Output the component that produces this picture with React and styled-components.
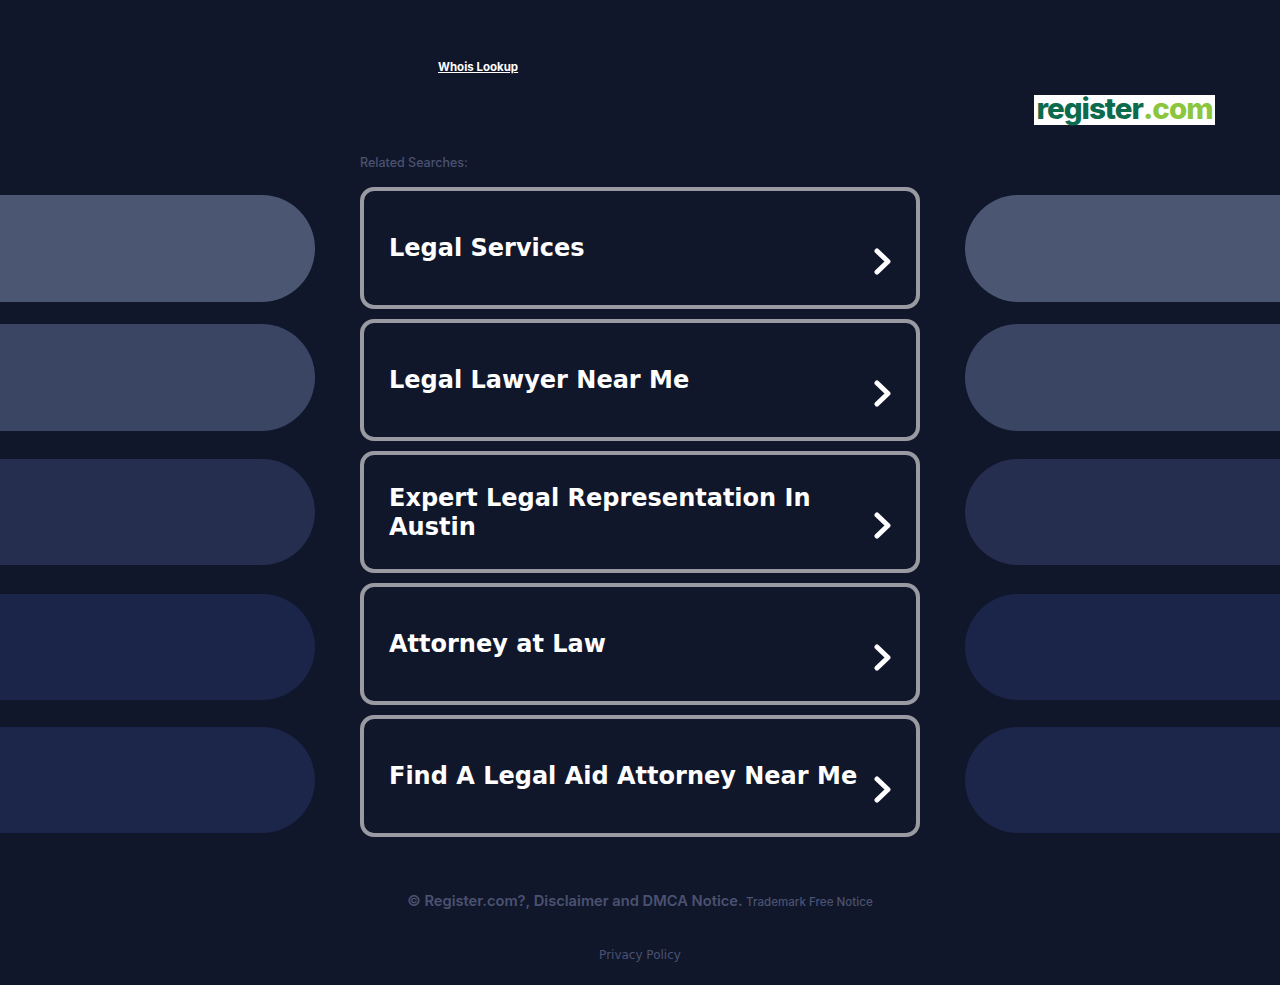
import React from "react";
import styled, { createGlobalStyle } from "styled-components";

const GlobalStyle = createGlobalStyle`
  html, body {
    margin: 0;
    padding: 0;
    background-color: #11172b;
  }
  a {
    color: inherit;
  }
`;

const Page = styled.div`
  width: 1280px;
  height: 985px;
  overflow: hidden;
  display: flex;
  flex-direction: column;
  background-color: #11172b;
`;

const Header = styled.header`
  height: 125px;
  display: flex;
  flex-direction: column;
  padding-top: 60px;
  box-sizing: border-box;
`;

const WhoisLink = styled.a`
  margin-left: 438px;
  font-family: "Inter", "Liberation Sans", sans-serif;
  font-size: 11.5px;
  line-height: 14px;
  font-weight: 700;
  color: #ffffff;
  text-decoration: underline;
`;

const LogoBox = styled.div`
  align-self: flex-end;
  margin-top: 21px;
  margin-right: 65px;
  width: 181px;
  height: 30px;
  background-color: #ffffff;
  display: flex;
  align-items: flex-start;
  justify-content: center;
  font-family: "Inter", "Liberation Sans", sans-serif;
  font-size: 29.5px;
  font-weight: 800;
  letter-spacing: -1px;
  line-height: 26px;
  white-space: nowrap;
`;

const LogoDark = styled.span`
  color: #0c6b4d;
`;

const LogoLight = styled.span`
  color: #8cc63f;
`;

const Main = styled.main`
  display: grid;
  grid-template-columns: 360px 560px 360px;
`;

const Side = styled.div`
  display: flex;
  flex-direction: column;
  padding-top: 70px;
  align-items: ${(props) => (props.$right ? "flex-end" : "flex-start")};
`;

const Pill = styled.div`
  width: 315px;
  height: ${(props) => props.$height}px;
  margin-bottom: ${(props) => props.$gap}px;
  background-color: ${(props) => props.$color};
  border-radius: ${(props) => (props.$right ? "54px 0 0 54px" : "0 54px 54px 0")};
`;

const Center = styled.div`
  display: flex;
  flex-direction: column;
  padding-top: 30px;
`;

const Related = styled.div`
  font-family: "Inter", "Liberation Sans", sans-serif;
  font-size: 12.5px;
  line-height: 15px;
  font-weight: 500;
  color: #4a5270;
  margin-bottom: 17px;
`;

const Cards = styled.div`
  display: flex;
  flex-direction: column;
  gap: 10px;
`;

const Card = styled.a`
  position: relative;
  height: 122px;
  box-sizing: border-box;
  border: 4px solid #9a9aa2;
  border-radius: 14px;
  display: flex;
  align-items: center;
  padding: 1px 0 0 25px;
  text-decoration: none;
`;

const CardText = styled.span`
  width: 475px;
  font-family: "DejaVu Sans", sans-serif;
  font-size: 24px;
  line-height: 29px;
  font-weight: 700;
  color: #ffffff;
`;

const Chevron = styled.svg`
  position: absolute;
  right: 25px;
  top: 57px;
  width: 17px;
  height: 27px;
`;

const Footer = styled.footer`
  display: flex;
  flex-direction: column;
  align-items: center;
  padding-top: 55px;
`;

const Notice = styled.div`
  font-family: "Inter", "Liberation Sans", sans-serif;
  font-size: 14.7px;
  line-height: 18px;
  font-weight: 600;
  color: #4a5270;
`;

const Trademark = styled.span`
  font-size: 11.6px;
  font-weight: 500;
`;

const Privacy = styled.a`
  margin-top: 37px;
  font-family: "DejaVu Sans", sans-serif;
  font-size: 12px;
  line-height: 15px;
  color: #4a5270;
  text-decoration: none;
`;

const pills = [
  { color: "#4b5672", height: 107, gap: 22 },
  { color: "#3a4463", height: 107, gap: 28 },
  { color: "#252e4e", height: 106, gap: 29 },
  { color: "#1b2549", height: 106, gap: 27 },
  { color: "#1c264a", height: 106, gap: 0 },
];

const links = [
  "Legal Services",
  "Legal Lawyer Near Me",
  "Expert Legal Representation In Austin",
  "Attorney at Law",
  "Find A Legal Aid Attorney Near Me",
];

const App = () => {
  return (
    <Page>
      <GlobalStyle />
      <Header>
        <WhoisLink href="#">Whois Lookup</WhoisLink>
        <LogoBox>
          <LogoDark>register</LogoDark>
          <LogoLight>.com</LogoLight>
        </LogoBox>
      </Header>
      <Main>
        <Side>
          {pills.map((pill) => (
            <Pill key={pill.color} $color={pill.color} $height={pill.height} $gap={pill.gap} />
          ))}
        </Side>
        <Center>
          <Related>Related Searches:</Related>
          <Cards>
            {links.map((link) => (
              <Card href="#" key={link}>
                <CardText>{link}</CardText>
                <Chevron viewBox="0 0 17 27">
                  <polyline
                    points="3,3 14,13.5 3,24"
                    fill="none"
                    stroke="#ffffff"
                    strokeWidth="5"
                    strokeLinecap="round"
                    strokeLinejoin="round"
                  />
                </Chevron>
              </Card>
            ))}
          </Cards>
        </Center>
        <Side $right>
          {pills.map((pill) => (
            <Pill key={pill.color} $right $color={pill.color} $height={pill.height} $gap={pill.gap} />
          ))}
        </Side>
      </Main>
      <Footer>
        <Notice>
          © Register.com?, Disclaimer and DMCA Notice. <Trademark>Trademark Free Notice</Trademark>
        </Notice>
        <Privacy href="#">Privacy Policy</Privacy>
      </Footer>
    </Page>
  );
};

export default App;
